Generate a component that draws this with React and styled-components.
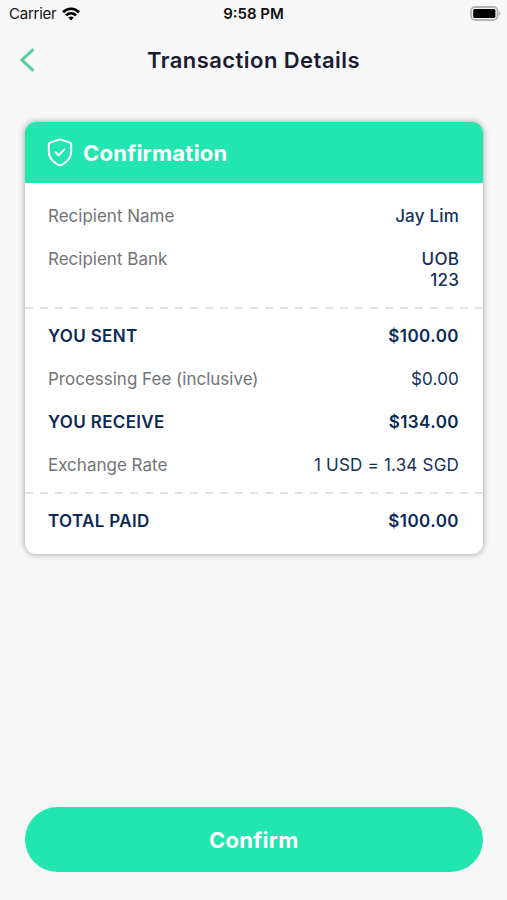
import React from "react";
import styled, { createGlobalStyle, ThemeProvider } from "styled-components";

const theme = {
  background: "#f7f7f7",
  card: "#ffffff",
  primary: "#22e5b0",
  back: "#55cf9d",
  title: "#1b1b33",
  navy: "#14325a",
  navyDark: "#0b2a55",
  grey: "#727477",
  dash: "#e2e2e2",
};

const sections = [
  [
    { id: "name", label: "Recipient Name", value: ["Jay Lim"], medium: true },
    { id: "bank", label: "Recipient Bank", value: ["UOB", "123"], medium: true },
  ],
  [
    { id: "sent", label: "YOU SENT", value: ["$100.00"], bold: true },
    { id: "fee", label: "Processing Fee (inclusive)", value: ["$0.00"] },
    { id: "receive", label: "YOU RECEIVE", value: ["$134.00"], bold: true },
    { id: "rate", label: "Exchange Rate", value: ["1 USD = 1.34 SGD"] },
  ],
  [{ id: "total", label: "TOTAL PAID", value: ["$100.00"], bold: true }],
];

const WifiIcon = () => (
  <svg width="18" height="14" viewBox="0 0 18 14">
    <g fill="none" stroke="#000" strokeWidth="2.7">
      <path d="M1 5.2C5.5 .6 12.5 .6 17 5.2" />
      <path d="M4 8.4c2.9-2.8 7.1-2.8 10 0" />
    </g>
    <path d="M6.2 10.5c1.7-1.5 3.9-1.5 5.6 0L9 13.4z" />
  </svg>
);

const BatteryIcon = () => (
  <svg width="31" height="15" viewBox="0 0 31 15">
    <rect x="1" y="1" width="26.5" height="13" rx="4" fill="#f7f7f7" stroke="#b4b4b4" strokeWidth="1.8" />
    <rect x="3.2" y="2.9" width="22.2" height="9.2" rx="1.5" fill="#000" />
    <path d="M28.6 5.2c2.1.8 2.1 3.800 0 4.6z" fill="#aaa" />
  </svg>
);

const BackIcon = () => (
  <svg width="15" height="24" viewBox="0 0 15 24">
    <path d="M13.5 1.200 2 12l11.5 10.8" fill="none" stroke={theme.back} strokeWidth="3" />
  </svg>
);

const ShieldIcon = () => (
  <svg width="26" height="29" viewBox="0 0 26 29" fill="none" stroke="#fff" strokeLinejoin="round" strokeLinecap="round">
    <path
      d="M13 1.400 23 4.600Q24.200 5 24.200 6.300V13.500C24.200 20 19 25.500 13 27.600C7 25.500 1.800 20 1.800 13.500V6.300Q1.800 5 3 4.600Z"
      strokeWidth="2"
    />
    <path d="m8.7 14.3 3 2.9 5.800-5.800" strokeWidth="2" />
  </svg>
);

const App = () => {
  return (
    <ThemeProvider theme={theme}>
      <GlobalStyle />
      <Screen>
        <StatusBar>
          <Carrier>
            Carrier
            <WifiIcon />
          </Carrier>
          <Time>9:58 PM</Time>
          <Battery>
            <BatteryIcon />
          </Battery>
        </StatusBar>
        <NavBar>
          <BackButton aria-label="Back">
            <BackIcon />
          </BackButton>
          <Title>Transaction Details</Title>
        </NavBar>
        <Card>
          <CardHead>
            <ShieldIcon />
            <CardTitle>Confirmation</CardTitle>
          </CardHead>
          {sections.map((rows) => (
            <Section key={rows[0].id}>
              {rows.map((row) => (
                <Row key={row.id}>
                  <Label $bold={row.bold}>{row.label}</Label>
                  <Value $bold={row.bold} $medium={row.medium}>
                    {row.value.map((line) => (
                      <span key={line}>{line}</span>
                    ))}
                  </Value>
                </Row>
              ))}
            </Section>
          ))}
        </Card>
        <ConfirmButton>Confirm</ConfirmButton>
      </Screen>
    </ThemeProvider>
  );
};

const GlobalStyle = createGlobalStyle`
  * {
    box-sizing: border-box;
  }

  body {
    margin: 0;
    background-color: ${theme.background};
    font-family: Inter, "Liberation Sans", sans-serif;
  }

  svg {
    display: block;
    flex-shrink: 0;
  }
`;

const Screen = styled.div`
  display: flex;
  flex-direction: column;
  width: 507px;
  height: 900px;
  padding-bottom: 28px;
  background-color: ${({ theme }) => theme.background};
`;

const StatusBar = styled.div`
  display: grid;
  grid-template-columns: 1fr auto 1fr;
  align-items: center;
  height: 27px;
  padding: 0 6px 0 9px;
  color: #111;
  font-size: 15px;
`;

const Carrier = styled.div`
  display: flex;
  align-items: center;
  gap: 6px;
  letter-spacing: -0.25px;
`;

const Time = styled.div`
  margin-right: 3px;
  font-weight: 600;
`;

const Battery = styled.div`
  justify-self: end;
`;

const NavBar = styled.div`
  display: grid;
  grid-template-columns: 60px 1fr 60px;
  align-items: center;
  height: 66px;
`;

const BackButton = styled.button`
  padding: 0 0 0 20px;
  border: none;
  background: none;
`;

const Title = styled.h1`
  margin: 0;
  color: ${({ theme }) => theme.title};
  font-size: 22px;
  font-weight: 600;
  letter-spacing: 0.45px;
  text-align: center;
`;

const Card = styled.div`
  height: 432px;
  margin: 29px 24.5px 0 25px;
  overflow: hidden;
  border-radius: 11px;
  background-color: ${({ theme }) => theme.card};
  box-shadow: 0 0 6px rgba(0, 0, 0, 0.38);
`;

const CardHead = styled.div`
  display: flex;
  align-items: center;
  gap: 10px;
  height: 61px;
  padding-left: 22px;
  background-color: ${({ theme }) => theme.primary};
`;

const CardTitle = styled.h2`
  margin: 0;
  color: #fff;
  font-size: 22px;
  font-weight: 700;
  letter-spacing: 0.25px;
`;

const Section = styled.div`
  display: flex;
  flex-direction: column;
  gap: 22px;
  padding: 23px 23.5px 15.4px 23px;

  & + & {
    padding: 18.6px 23.5px 15.6px 23px;
    background: repeating-linear-gradient(
        90deg,
        ${({ theme }) => theme.dash} 0 8px,
        transparent 8px 15px
      )
      top / 100% 2px no-repeat;
  }

  &:last-child {
    padding-top: 19.4px;
  }
`;

const Row = styled.div`
  display: flex;
  justify-content: space-between;
  font-size: 17px;
  line-height: 21.2px;
`;

const Label = styled.span`
  color: ${({ theme, $bold }) => ($bold ? theme.navyDark : theme.grey)};
  font-weight: ${({ $bold }) => ($bold ? 600 : 400)};
  letter-spacing: ${({ $bold }) => ($bold ? "0.35px" : 0)};
`;

const Value = styled.span`
  display: flex;
  flex-direction: column;
  align-items: flex-end;
  color: ${({ theme, $bold }) => ($bold ? theme.navyDark : theme.navy)};
  font-weight: ${({ $bold, $medium }) => ($bold ? 600 : $medium ? 500 : 400)};
  letter-spacing: ${({ $bold }) => ($bold ? "0.45px" : "0.2px")};
`;

const ConfirmButton = styled.button`
  height: 65px;
  margin: auto 24.5px 0 25px;
  border: none;
  border-radius: 33px;
  background-color: ${({ theme }) => theme.primary};
  color: #fff;
  font-family: inherit;
  font-size: 22px;
  font-weight: 700;
  letter-spacing: 0.3px;
`;

export default App;
